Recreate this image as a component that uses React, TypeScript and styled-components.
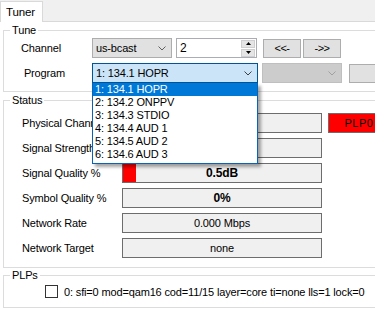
import styled, { createGlobalStyle } from "styled-components";

const GlobalStyle = createGlobalStyle`
  html, body {
    margin: 0;
    padding: 0;
    background: #fff;
    overflow: hidden;
  }
  body {
    font-family: "Liberation Sans", Arial, sans-serif;
    font-size: 11px;
    letter-spacing: -0.15px;
    color: #000;
  }
`;

const programs = [
  "1: 134.1 HOPR",
  "2: 134.2 ONPPV",
  "3: 134.3 STDIO",
  "4: 134.4 AUD 1",
  "5: 134.5 AUD 2",
  "6: 134.6 AUD 3",
];

const statusRows = [
  { label: "Physical Channel", value: "", bold: false, bar: 0, plp: true },
  { label: "Signal Strength %", value: "", bold: false, bar: 0, plp: false },
  { label: "Signal Quality %", value: "0.5dB", bold: true, bar: 13, plp: false },
  { label: "Symbol Quality %", value: "0%", bold: true, bar: 0, plp: false },
  { label: "Network Rate", value: "0.000 Mbps", bold: false, bar: 0, plp: false },
  { label: "Network Target", value: "none", bold: false, bar: 0, plp: false },
];

const Window = styled.div`
  position: relative;
  width: 375px;
  height: 312px;
  overflow: hidden;
  background: #fff;
`;

const TabStrip = styled.div`
  display: flex;
  align-items: flex-end;
  box-sizing: border-box;
  height: 22px;
  background: #f0f0f0;
  border-bottom: 1px solid #d9d9d9;
`;

const Tab = styled.div`
  box-sizing: border-box;
  width: 43px;
  height: 21px;
  margin-bottom: -1px;
  padding: 3px 0 0 5px;
  background: #fff;
  border: 1px solid #d9d9d9;
  border-bottom: none;
  font-size: 11.5px;
  line-height: 14px;
`;

const Page = styled.div`
  display: flex;
  flex-direction: column;
  padding: 2px 0 0 3px;
`;

const Group = styled.fieldset<{ $top: number; $bottom: number }>`
  margin: ${(p) => p.$top}px 0 0 0;
  padding: 0 0 ${(p) => p.$bottom}px 0;
  width: 440px;
  min-width: 0;
  border: 1px solid #dcdcdc;
`;

const Legend = styled.legend`
  margin-left: 6px;
  padding: 0 2px;
  line-height: 13px;
`;

const Rows = styled.div<{ $pad: number; $left: number }>`
  display: flex;
  flex-direction: column;
  gap: 5px;
  padding: ${(p) => p.$pad}px 0 0 ${(p) => p.$left}px;
`;

const Row = styled.div`
  display: flex;
  align-items: center;
  height: 20px;
`;

const Label = styled.div<{ $w: number }>`
  width: ${(p) => p.$w}px;
  flex: none;
  white-space: nowrap;
  overflow: hidden;
`;

const Combo = styled.div<{ $w: number; $state?: "focus" | "off" }>`
  box-sizing: border-box;
  position: relative;
  display: flex;
  align-items: center;
  justify-content: space-between;
  width: ${(p) => p.$w}px;
  height: 20px;
  padding: 0 5px 0 3px;
  flex: none;
  background: ${(p) =>
    p.$state === "focus" ? "#cce4f7" : p.$state === "off" ? "#cccccc" : "#e1e1e1"};
  border: 1px solid
    ${(p) => (p.$state === "focus" ? "#005499" : p.$state === "off" ? "#bfbfbf" : "#adadad")};
  color: ${(p) => (p.$state === "off" ? "#838383" : "#000")};
  white-space: nowrap;
`;

const Spin = styled.div`
  box-sizing: border-box;
  display: flex;
  align-items: center;
  justify-content: space-between;
  width: 81px;
  height: 20px;
  margin-left: 4px;
  padding: 0 1px 0 3px;
  flex: none;
  background: #fff;
  border: 1px solid #abadb3;
  font-size: 12px;
`;

const SpinButtons = styled.div`
  display: flex;
  flex-direction: column;
  gap: 1px;
`;

const SpinButton = styled.div`
  box-sizing: border-box;
  display: flex;
  align-items: center;
  justify-content: center;
  width: 14px;
  height: 8px;
  background: #e5e5e5;
  border: 1px solid #cfcfcf;
`;

const Button = styled.div<{ $w: number; $gap: number }>`
  box-sizing: border-box;
  display: flex;
  align-items: center;
  justify-content: center;
  width: ${(p) => p.$w}px;
  height: 19px;
  margin-left: ${(p) => p.$gap}px;
  flex: none;
  background: #e1e1e1;
  border: 1px solid #adadad;
  font-size: 11px;
  letter-spacing: -0.5px;
`;

const DropList = styled.div`
  position: absolute;
  top: 19px;
  left: -1px;
  z-index: 10;
  box-sizing: border-box;
  width: 166px;
  padding-bottom: 2px;
  background: #fff;
  border: 1px solid #0b63b5;
  border-top: none;
  box-shadow: 3px 3px 3px rgba(0, 0, 0, 0.35);
`;

const DropItem = styled.div<{ $active?: boolean }>`
  height: 13px;
  padding-left: 2px;
  line-height: 13px;
  background: ${(p) => (p.$active ? "#0078d7" : "#fff")};
  color: ${(p) => (p.$active ? "#fff" : "#000")};
  white-space: nowrap;
`;

const ValueBox = styled.div<{ $bold?: boolean }>`
  box-sizing: border-box;
  position: relative;
  width: 200px;
  height: 20px;
  flex: none;
  background: #f0f0f0;
  border: 1px solid #6d6d6d;
  text-align: center;
  line-height: 18px;
  font-weight: ${(p) => (p.$bold ? 700 : 400)};
  font-size: ${(p) => (p.$bold ? "12px" : "11px")};
`;

const Bar = styled.div`
  position: absolute;
  top: 0;
  left: 0;
  bottom: 0;
  background: #ff0000;
`;

const ValueText = styled.span`
  position: relative;
`;

const PlpBox = styled.div`
  box-sizing: border-box;
  width: 62px;
  height: 20px;
  margin-left: 6px;
  flex: none;
  background: #ff0000;
  border: 1px solid #6d6d6d;
  text-align: center;
  line-height: 18px;
  letter-spacing: 0.5px;
`;

const CheckRow = styled.label`
  display: flex;
  align-items: center;
  gap: 6px;
  height: 15px;
  padding: 2px 0 0 41px;
  white-space: nowrap;
`;

const CheckBox = styled.span`
  box-sizing: border-box;
  width: 13px;
  height: 13px;
  flex: none;
  background: #fff;
  border: 1px solid #333;
`;

const Chevron = ({ color }: { color: string }) => (
  <svg width="8" height="5" viewBox="0 0 8 5">
    <path d="M0.5 0.5 L4 4 L7.5 0.5" fill="none" stroke={color} strokeWidth="1" />
  </svg>
);

const Triangle = ({ up }: { up?: boolean }) => (
  <svg width="5" height="3" viewBox="0 0 5 3">
    <path d={up ? "M0 3 L2.5 0 L5 3 Z" : "M0 0 L2.5 3 L5 0 Z"} fill="#000" />
  </svg>
);

export default function App() {
  return (
    <Window>
      <GlobalStyle />
      <TabStrip>
        <Tab>Tuner</Tab>
      </TabStrip>
      <Page>
        <Group $top={0} $bottom={8}>
          <Legend>Tune</Legend>
          <Rows $pad={1} $left={17}>
            <Row>
              <Label $w={71}>Channel</Label>
              <Combo $w={80}>
                <span>us-bcast</span>
                <Chevron color="#606060" />
              </Combo>
              <Spin>
                <span>2</span>
                <SpinButtons>
                  <SpinButton>
                    <Triangle up />
                  </SpinButton>
                  <SpinButton>
                    <Triangle />
                  </SpinButton>
                </SpinButtons>
              </Spin>
              <Button $w={38} $gap={6}>
                &lt;&lt;-
              </Button>
              <Button $w={38} $gap={2}>
                -&gt;&gt;
              </Button>
            </Row>
            <Row>
              <Label $w={71}>&nbsp;Program</Label>
              <Combo $w={166} $state="focus">
                <span>{programs[0]}</span>
                <Chevron color="#404040" />
                <DropList>
                  {programs.map((p, i) => (
                    <DropItem key={p} $active={i === 0}>
                      {p}
                    </DropItem>
                  ))}
                </DropList>
              </Combo>
              <Combo $w={80} $state="off" style={{ marginLeft: 4 }}>
                <span />
                <Chevron color="#a0a0a0" />
              </Combo>
              <Button $w={40} $gap={7} />
            </Row>
          </Rows>
        </Group>
        <Group $top={2} $bottom={9}>
          <Legend>Status</Legend>
          <Rows $pad={6} $left={18}>
            {statusRows.map((r) => (
              <Row key={r.label}>
                <Label $w={100}>{r.label}</Label>
                <ValueBox $bold={r.bold}>
                  {r.bar > 0 && <Bar style={{ width: r.bar }} />}
                  <ValueText>{r.value}</ValueText>
                </ValueBox>
                {r.plp && <PlpBox>PLP0</PlpBox>}
              </Row>
            ))}
          </Rows>
        </Group>
        <Group $top={1} $bottom={8}>
          <Legend>PLPs</Legend>
          <CheckRow>
            <CheckBox />
            0: sfi=0 mod=qam16 cod=11/15 layer=core ti=none lls=1 lock=0
          </CheckRow>
        </Group>
      </Page>
    </Window>
  );
}
